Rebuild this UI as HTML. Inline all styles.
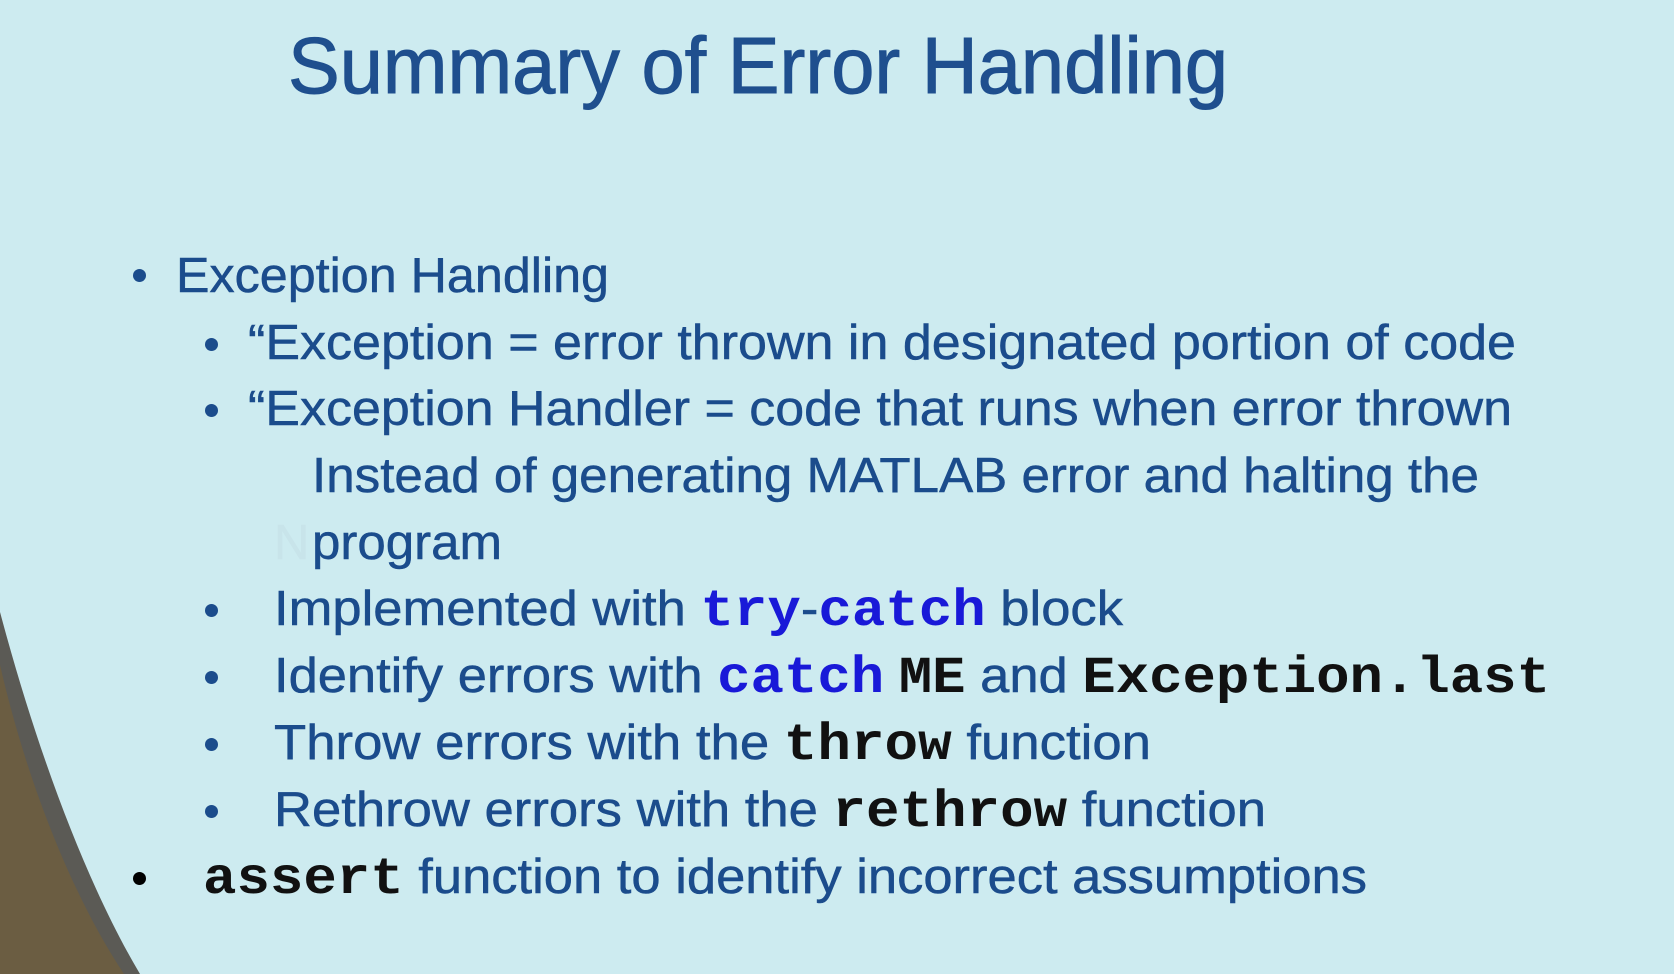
<!DOCTYPE html>
<html><head><meta charset="utf-8"><style>
html,body{margin:0;padding:0}
body{width:1674px;height:974px;overflow:hidden;background:#cdebf0;position:relative;font-family:"Liberation Sans",sans-serif}
.l{position:absolute;white-space:nowrap;line-height:1;color:#1b4c8c;transform-origin:0 0;-webkit-text-stroke:0.5px currentColor}
.b{font-size:49px}
.m{font-family:"Liberation Mono",monospace;font-weight:bold;font-size:52px;-webkit-text-stroke:0}
.bl{color:#1919d8}.k{color:#111}
.dot{position:absolute;width:13px;height:13px;border-radius:50%;background:#1b4c8c}
</style></head><body>
<svg style="position:absolute;left:0;top:0" width="1674" height="974">
<path d="M0 612 C40 762 90 890 140 974 L0 974 Z" fill="#5b5a55"/>
<path d="M0 665 C30 795 78 905 124 974 L0 974 Z" fill="#6b5d42"/>
</svg>
<div class="l" id="t" data-w="940" style="left:288px;top:26px;font-size:80px;color:#1f4f8e;-webkit-text-stroke:1px #1f4f8e">Summary of Error Handling</div>

<div class="dot" style="left:133px;top:269px"></div>
<div class="l b" data-w="433" style="left:176px;top:252px">Exception Handling</div>

<div class="dot" style="left:205px;top:338px"></div>
<div class="l b" data-w="1268" style="left:248px;top:319px">“Exception = error thrown in designated portion of code</div>

<div class="dot" style="left:205px;top:404px"></div>
<div class="l b" data-w="1264" style="left:248px;top:385px">“Exception Handler = code that runs when error thrown</div>

<div class="l b" data-w="1167" style="left:312px;top:452px">Instead of generating MATLAB error and halting the</div>
<div class="l b" style="left:274px;top:519px;color:#c8e4ea">N</div>
<div class="l b" data-w="190" style="left:312px;top:519px">program</div>

<div class="dot" style="left:205px;top:604px"></div>
<div class="l b" data-w="849" style="left:274px;top:585px">Implemented with <span class="m bl">try</span>-<span class="m bl">catch</span> block</div>

<div class="dot" style="left:205px;top:671px"></div>
<div class="l b" data-w="1276" style="left:274px;top:652px">Identify errors with <span class="m bl">catch</span> <span class="m k">ME</span> and <span class="m k">Exception.last</span></div>

<div class="dot" style="left:205px;top:738px"></div>
<div class="l b" data-w="877" style="left:274px;top:719px">Throw errors with the <span class="m k">throw</span> function</div>

<div class="dot" style="left:205px;top:805px"></div>
<div class="l b" data-w="992" style="left:274px;top:786px">Rethrow errors with the <span class="m k">rethrow</span> function</div>

<div class="dot" style="left:133px;top:872px;background:#000"></div>
<div class="l b" data-w="1164" style="left:203px;top:853px"><span class="m k">assert</span> function to identify incorrect assumptions</div>
<script>
document.querySelectorAll('[data-w]').forEach(function(e){
  var w=e.getBoundingClientRect().width, t=+e.getAttribute('data-w');
  if(w>0) e.style.transform='scaleX('+(t/w)+')';
});
</script>
</body></html>
